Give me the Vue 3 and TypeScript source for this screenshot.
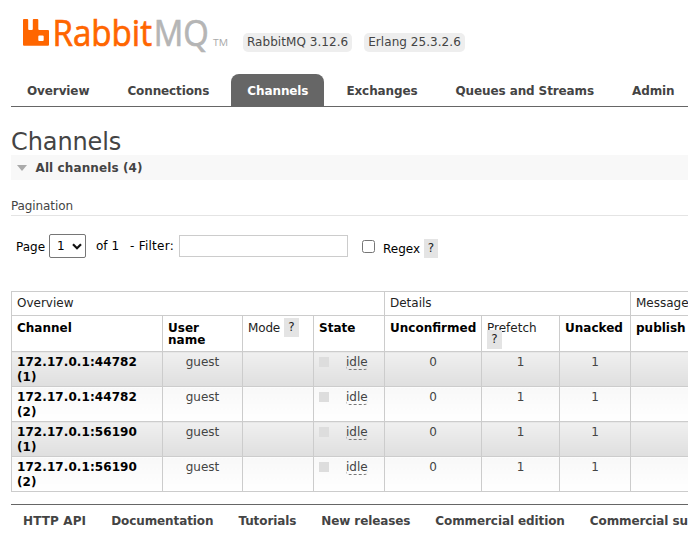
<script setup lang="ts">
interface Tab {
  label: string
  active?: boolean
}

interface Channel {
  name: string
  index: number
  user: string
  state: string
  unconfirmed: number
  prefetch: number
  unacked: number
}

const versions: string[] = ['RabbitMQ 3.12.6', 'Erlang 25.3.2.6']

const tabs: Tab[] = [
  { label: 'Overview' },
  { label: 'Connections' },
  { label: 'Channels', active: true },
  { label: 'Exchanges' },
  { label: 'Queues and Streams' },
  { label: 'Admin' },
]

const makeChannel = (name: string, index: number): Channel => ({
  name,
  index,
  user: 'guest',
  state: 'idle',
  unconfirmed: 0,
  prefetch: 1,
  unacked: 1,
})

const channels: Channel[] = [
  makeChannel('172.17.0.1:44782', 1),
  makeChannel('172.17.0.1:44782', 2),
  makeChannel('172.17.0.1:56190', 1),
  makeChannel('172.17.0.1:56190', 2),
]

const links: string[] = [
  'HTTP API',
  'Documentation',
  'Tutorials',
  'New releases',
  'Commercial edition',
  'Commercial support',
]
</script>

<template>
  <div class="page">
    <header class="header">
      <svg class="logo" width="210" height="42" viewBox="20 12 210 42" role="img">
        <path
          fill="#ff6600"
          fill-rule="evenodd"
          d="M24 19h3.2a1 1 0 0 1 1 1v9a1 1 0 0 0 1 1h2.6a1 1 0 0 0 1-1v-9a1 1 0 0 1 1-1h3.5a1 1 0 0 1 1 1v9a1 1 0 0 0 1 1h8.700a1 1 0 0 1 1 1v13.800a1 1 0 0 1-1 1H24a1 1 0 0 1-1-1V20a1 1 0 0 1 1-1zM39.300 35.600a1 1 0 0 0-1 1v3.300a1 1 0 0 0 1 1h3.400a1 1 0 0 0 1-1v-3.300a1 1 0 0 0-1-1z"
        />
        <text class="word rabbit" x="52.500" y="45.800" textLength="99.500" lengthAdjust="spacingAndGlyphs">Rabbit</text>
        <text class="word mq" x="153.800" y="45.800" textLength="55" lengthAdjust="spacingAndGlyphs">MQ</text>
        <text class="tm" x="213" y="46" textLength="15" lengthAdjust="spacingAndGlyphs">TM</text>
      </svg>
      <div class="versions">
        <span v-for="v in versions" :key="v" class="version">{{ v }}</span>
      </div>
    </header>

    <nav class="tabs">
      <a v-for="t in tabs" :key="t.label" class="tab" :class="{ active: t.active }">{{ t.label }}</a>
    </nav>

    <main>
      <h1>Channels</h1>
      <h2><i class="arrow"></i>All channels (4)</h2>
      <h3>Pagination</h3>

      <div class="filters">
        <span class="page-label">Page</span>
        <span class="select">
          1
          <svg width="10" height="7" viewBox="0 0 10 7"><path d="M1 1.200l4 4 4-4" fill="none" stroke="#111" stroke-width="2.200" /></svg>
        </span>
        <span class="of">of 1</span>
        <span class="filter-label">- Filter:</span>
        <input class="filter" type="text" />
        <span class="check"></span>
        <span class="regex">Regex</span>
        <span class="help">?</span>
      </div>

      <table>
        <colgroup>
          <col class="c-channel" /><col class="c-user" /><col class="c-mode" /><col class="c-state" />
          <col class="c-unconfirmed" /><col class="c-prefetch" /><col class="c-unacked" /><col class="c-publish" />
        </colgroup>
        <thead>
          <tr class="groups">
            <th colspan="4">Overview</th>
            <th colspan="3">Details</th>
            <th>Message rates</th>
          </tr>
          <tr class="heads">
            <th class="sortable">Channel</th>
            <th class="sortable">User<br />name</th>
            <th class="mode">Mode <span class="help">?</span></th>
            <th class="sortable">State</th>
            <th class="sortable">Unconfirmed</th>
            <th>Prefetch<br /><span class="help">?</span></th>
            <th class="sortable">Unacked</th>
            <th class="sortable">publish</th>
          </tr>
        </thead>
        <tbody>
          <tr v-for="c in channels" :key="c.name + c.index">
            <td class="name">{{ c.name }}<br />({{ c.index }})</td>
            <td>{{ c.user }}</td>
            <td></td>
            <td>
              <div class="state"><i class="square"></i><span class="idle">{{ c.state }}</span></div>
            </td>
            <td>{{ c.unconfirmed }}</td>
            <td>{{ c.prefetch }}</td>
            <td>{{ c.unacked }}</td>
            <td></td>
          </tr>
        </tbody>
      </table>
    </main>

    <footer>
      <a v-for="l in links" :key="l">{{ l }}</a>
    </footer>
  </div>
</template>

<style>
body {
  margin: 0;
  background: #fff;
}
</style>

<style scoped>
.page {
  box-sizing: border-box;
  width: 688px;
  height: 540px;
  padding-left: 11px;
  overflow: hidden;
  color: #444;
  font: 12px/15px Verdana, 'DejaVu Sans', sans-serif;
}
.header {
  display: flex;
  align-items: flex-start;
  height: 62px;
  padding: 12px 0 0 9px;
}
.logo {
  flex: none;
}
.word {
  font-family: 'Open Sans', sans-serif;
  font-size: 36.500px;
  stroke-width: 0.7px;
}
.rabbit {
  fill: #ff6600;
  stroke: #ff6600;
}
.mq {
  fill: #b5b5b5;
  stroke: #b5b5b5;
}
.tm {
  fill: #aaa;
  font: 9px 'Open Sans', sans-serif;
}
.versions {
  display: flex;
  gap: 12px;
  padding: 21px 0 0 13px;
}
.version {
  height: 19px;
  padding: 0 4px;
  border-radius: 5px;
  background: #eee;
  line-height: 19px;
  white-space: nowrap;
  letter-spacing: 0.05px;
}
.tabs {
  display: flex;
  gap: 6px;
  height: 32px;
  border-bottom: 1px solid #666;
  white-space: nowrap;
}
.tab {
  padding: 0 16px;
  border-radius: 8px 8px 0 0;
  font-weight: bold;
  line-height: 34px;
  letter-spacing: -0.11px;
}
.tab.active {
  background: #666;
  color: #fff;
}
h1 {
  height: 26px;
  margin: 22px 0 0;
  font-size: 24px;
  font-weight: normal;
  line-height: 26px;
  letter-spacing: -0.1px;
}
h2 {
  display: flex;
  align-items: center;
  height: 25px;
  margin: 0;
  padding-left: 6px;
  background: #f8f8f8;
  font-size: 12px;
  line-height: 26px;
  letter-spacing: 0.1px;
}
.arrow {
  margin-right: 8.500px;
  border: 5.500px solid transparent;
  border-top: 6px solid #aaa;
  border-bottom: 0;
}
h3 {
  height: 17px;
  margin: 18px 0 0;
  border-bottom: 1px solid #e4e4e4;
  font-size: 12px;
  font-weight: normal;
  line-height: 16px;
  letter-spacing: -0.1px;
}
.filters {
  display: flex;
  height: 75px;
  box-sizing: border-box;
  padding: 18px 0 0 5px;
  color: #000;
  white-space: nowrap;
}
.page-label {
  width: 33px;
  padding-top: 6px;
}
.select {
  box-sizing: border-box;
  display: flex;
  align-items: center;
  gap: 6px;
  width: 37px;
  height: 24px;
  padding-left: 7px;
  border: 1px solid #767676;
  border-radius: 2px;
  line-height: 17px;
}
.select svg {
  margin-left: 1px;
}
.of {
  width: 34px;
  padding: 5px 0 0 10px;
}
.filter-label {
  width: 49px;
  padding-top: 5px;
  letter-spacing: 0.25px;
}
.filter {
  box-sizing: border-box;
  width: 169px;
  height: 22px;
  margin: 1px 14px 0 0;
  border: 1px solid #ccc;
}
.check {
  box-sizing: border-box;
  width: 13px;
  height: 13px;
  margin: 6px 8px 0 0;
  border: 1px solid #767676;
  border-radius: 2.500px;
}
.regex {
  width: 41px;
  padding-top: 8px;
}
.help {
  display: inline-block;
  width: 15px;
  height: 19px;
  background: #e4e4e4;
  color: #222;
  line-height: 19px;
  text-align: center;
}
.filters .help {
  width: 14px;
  margin-top: 5px;
}
table {
  width: 770px;
  table-layout: fixed;
  border-collapse: collapse;
}
.c-channel { width: 151px; }
.c-user { width: 80px; }
.c-mode { width: 71px; }
.c-state { width: 71px; }
.c-unconfirmed { width: 97px; }
.c-prefetch { width: 78px; }
.c-unacked { width: 71px; }
.c-publish { width: 151px; }
th,
td {
  box-sizing: border-box;
  padding: 3px 5px 0;
  border: 1px solid #ccc;
  vertical-align: top;
}
th {
  color: #222;
  font-weight: normal;
  text-align: left;
  white-space: nowrap;
}
.groups th {
  height: 24px;
  padding-top: 4px;
}
.heads th {
  height: 36px;
  padding-top: 6px;
  line-height: 12px;
}
.heads .sortable {
  color: #000;
  font-weight: bold;
}
.heads .mode {
  letter-spacing: -0.15px;
}
.heads .help {
  margin: -4px 0 -5px;
  vertical-align: top;
}
tbody td {
  height: 35px;
  background: linear-gradient(#f8f8f8, #fff);
  text-align: center;
}
tbody tr:nth-child(odd) td {
  background: linear-gradient(#f0f0f0, #dfdfdf);
}
tbody .name {
  color: #000;
  font-weight: bold;
  text-align: left;
  letter-spacing: 0.08px;
}
.state {
  display: flex;
}
.square {
  width: 10px;
  height: 10px;
  margin: 2px 17px 0 0;
  background: #ddd;
}
.idle {
  height: 14px;
  border-bottom: 1px dashed #777;
  border-radius: 4px;
}
footer {
  display: flex;
  gap: 25px;
  margin-top: 12px;
  padding: 9px 0 0 12px;
  border-top: 1px solid #666;
  font-weight: bold;
  white-space: nowrap;
  letter-spacing: -0.1px;
}
footer a:first-child {
  letter-spacing: 0.12px;
}
</style>
